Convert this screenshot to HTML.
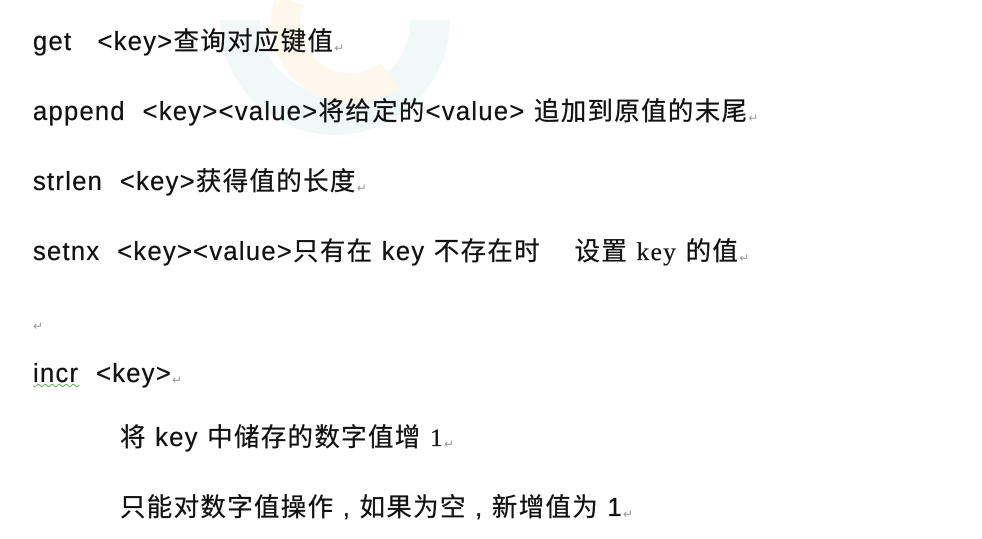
<!DOCTYPE html>
<html><head><meta charset="utf-8"><style>
html,body{margin:0;padding:0;background:#fff;width:982px;height:539px;overflow:hidden;position:relative}
.l{position:absolute;left:33px;font-family:"Liberation Sans","Noto Sans CJK SC",sans-serif;font-size:25.5px;letter-spacing:1.3px;color:#111;white-space:pre;line-height:30px;-webkit-text-stroke:0.3px #111}
.r{color:#999;font-size:12px;vertical-align:-2px;-webkit-text-stroke:0}
.s{font-family:"Liberation Serif","Noto Sans CJK SC",serif}
</style></head><body>
<svg style="position:absolute;left:0;top:0" width="982" height="539">
<path d="M240 20 A 95 95 0 0 0 430 20" fill="none" stroke="#f0f8f8" stroke-width="40"/>
<path d="M290 0 A 65 65 0 0 0 390 75" fill="none" stroke="#fef8ec" stroke-width="30"/>
</svg>
<div class="l" style="top:27px">get   &lt;key&gt;查询对应键值<span class="r">↵</span></div>
<div class="l" style="top:97px">append  &lt;key&gt;&lt;value&gt;将给定的&lt;value&gt; 追加到原值的末尾<span class="r">↵</span></div>
<div class="l" style="top:167px">strlen  &lt;key&gt;获得值的长度<span class="r">↵</span></div>
<div class="l" style="top:237px">setnx  &lt;key&gt;&lt;value&gt;只有在 key 不存在时    设置 <span class="s">key</span> 的值<span class="r">↵</span></div>
<div class="l" style="top:305px"><span class="r">↵</span></div>
<div class="l" style="top:359px"><span style="text-decoration:underline wavy #6a6;text-decoration-thickness:1px">incr</span>  &lt;key&gt;<span class="r">↵</span></div>
<div class="l" style="top:423px;left:120px">将 key 中储存的数字值增 <span class="s">1</span><span class="r">↵</span></div>
<div class="l" style="top:493px;left:120px">只能对数字值操作 , 如果为空 , 新增值为 1<span class="r">↵</span></div>
</body></html>
